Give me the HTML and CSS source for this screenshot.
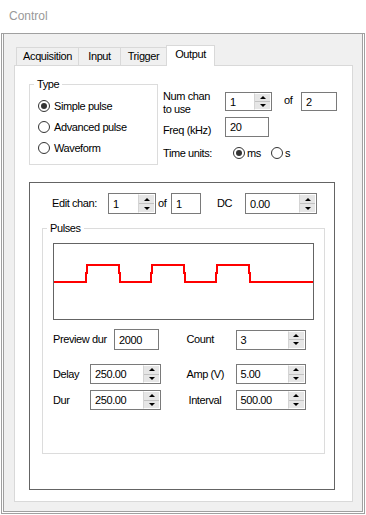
FILE: index.html
```html
<!DOCTYPE html>
<html lang="en">
<head>
    <meta charset="UTF-8">
    <title>Control</title>
    <link rel="stylesheet" href="styles.css">
</head>
<body>

    <!-- Title bar -->
    <div class="titlebar">
        <span class="title">Control</span>
    </div>

    <div class="frame">
        <div class="client">

            <!-- Tabs -->
            <div class="tabs">
                <div class="tab tab-acq">Acquisition</div>
                <div class="tab tab-input">Input</div>
                <div class="tab tab-trigger">Trigger</div>
                <div class="tab tab-output active">Output</div>
            </div>

            <div class="tab-page">
                <div class="top-area">
                    <fieldset class="group type-group">
                        <legend>Type</legend>
                        <div class="radio-row"><span class="radio checked"></span>Simple pulse</div>
                        <div class="radio-row"><span class="radio"></span>Advanced pulse</div>
                        <div class="radio-row"><span class="radio"></span>Waveform</div>
                    </fieldset>

                    <div class="chan-settings">
                        <div class="row row-chan">
                            <span class="lbl lbl-chan">Num chan<br>to use</span>
                            <div class="spin w-chan">
                                <span class="val">1</span>
                                <span class="btns"><span class="btn"><i class="up"></i></span><span class="btn"><i class="down"></i></span></span>
                            </div>
                            <span class="of of-chan">of</span>
                            <div class="field w-total">2</div>
                        </div>
                        <div class="row row-freq">
                            <span class="lbl lbl-chan">Freq (kHz)</span>
                            <div class="field w-freq">20</div>
                        </div>
                        <div class="row row-units">
                            <span class="lbl lbl-units">Time units:</span>
                            <span class="radio checked"></span><span class="opt opt-ms">ms</span>
                            <span class="radio"></span><span class="opt">s</span>
                        </div>
                    </div>
                </div>

                <div class="edit-panel">
                    <div class="edit-row">
                        <span class="lbl lbl-edit">Edit chan:</span>
                        <div class="spin w-edit">
                            <span class="val">1</span>
                            <span class="btns"><span class="btn"><i class="up"></i></span><span class="btn"><i class="down"></i></span></span>
                        </div>
                        <span class="of of-edit">of</span>
                        <div class="field w-one">1</div>
                        <span class="lbl lbl-dc">DC</span>
                        <div class="spin w-dc">
                            <span class="val">0.00</span>
                            <span class="btns"><span class="btn"><i class="up"></i></span><span class="btn"><i class="down"></i></span></span>
                        </div>
                    </div>

                    <fieldset class="group pulses-group">
                        <legend>Pulses</legend>
                        <div class="pulses-body">
                            <div class="preview">
                                <svg width="259" height="75" viewBox="0 0 259 75">
                                    <path d="M0 38 H32 V29 H33 V21 H65 V29 H66 V38 H97 V29 H98 V21 H130 V29 H131 V38 H162 V29 H163 V21 H195 V29 H196 V38 H259" fill="none" stroke="#ff0000" stroke-width="2" shape-rendering="crispEdges"/>
                                </svg>
                            </div>

                            <div class="param-row row-a">
                                <div class="cell">
                                    <span class="lbl lbl-preview">Preview dur</span>
                                    <div class="field w-preview">2000</div>
                                </div>
                                <div class="cell">
                                    <span class="lbl lbl-right">Count</span>
                                    <div class="spin w-right">
                                        <span class="val">3</span>
                                        <span class="btns"><span class="btn"><i class="up"></i></span><span class="btn"><i class="down"></i></span></span>
                                    </div>
                                </div>
                            </div>

                            <div class="param-row row-b">
                                <div class="cell">
                                    <span class="lbl lbl-short">Delay</span>
                                    <div class="spin w-left">
                                        <span class="val">250.00</span>
                                        <span class="btns"><span class="btn"><i class="up"></i></span><span class="btn"><i class="down"></i></span></span>
                                    </div>
                                </div>
                                <div class="cell">
                                    <span class="lbl lbl-right">Amp (V)</span>
                                    <div class="spin w-right">
                                        <span class="val">5.00</span>
                                        <span class="btns"><span class="btn"><i class="up"></i></span><span class="btn"><i class="down"></i></span></span>
                                    </div>
                                </div>
                            </div>

                            <div class="param-row row-c">
                                <div class="cell">
                                    <span class="lbl lbl-short">Dur</span>
                                    <div class="spin w-left">
                                        <span class="val">250.00</span>
                                        <span class="btns"><span class="btn"><i class="up"></i></span><span class="btn"><i class="down"></i></span></span>
                                    </div>
                                </div>
                                <div class="cell">
                                    <span class="lbl lbl-right lbl-interval">Interval</span>
                                    <div class="spin w-right">
                                        <span class="val">500.00</span>
                                        <span class="btns"><span class="btn"><i class="up"></i></span><span class="btn"><i class="down"></i></span></span>
                                    </div>
                                </div>
                            </div>
                        </div>
                    </fieldset>
                </div>
            </div>

        </div>
    </div>

</body>
</html>
```

FILE: styles.css
```css
* {
    margin: 0;
    padding: 0;
    box-sizing: border-box;
}

body {
    width: 366px;
    height: 515px;
    overflow: hidden;
    background: #fff;
    font-family: 'Liberation Sans', Arial, sans-serif;
    font-size: 11px;
    letter-spacing: -0.4px;
    color: #000;
}

/* Window chrome */
.titlebar {
    height: 33px;
    padding: 0 0 2px 9px;
    display: flex;
    align-items: center;
}

.title {
    font-size: 12px;
    letter-spacing: 0;
    color: #999;
}

.frame {
    margin: 0 1px;
    height: 481px;
    border: 1px solid #a0a0a0;
    padding: 0 1px 1px;
}

.client {
    height: 100%;
    border: 1px solid #a0a0a0;
    border-top: none;
    background: #f0f0f0;
    padding: 11px 9px 0 10px;
}

/* Tabs */
.tabs {
    display: flex;
    align-items: flex-end;
    height: 20px;
    padding-left: 2px;
}

.tab {
    height: 18px;
    line-height: 17px;
    text-align: center;
    border: 1px solid #d9d9d9;
    border-bottom: none;
    margin-right: -1px;
    background: #f0f0f0;
}

.tab.active {
    height: 21px;
    margin-bottom: -1px;
    padding-top: 1px;
    line-height: 15px;
    background: #fff;
    position: relative;
    z-index: 1;
}

.tab-acq { width: 63px; }
.tab-input { width: 43px; }
.tab-trigger { width: 47px; }
.tab-output { width: 49px; }

.tab-page {
    height: 437px;
    border: 1px solid #d9d9d9;
    background: #fff;
}

/* Group boxes */
.group {
    border: 1px solid #dcdcdc;
    min-width: 0;
}

.group legend {
    padding: 0 3px;
    line-height: 13px;
}

.top-area {
    display: flex;
    align-items: flex-start;
    padding-left: 14px;
}

.type-group {
    margin-top: 12px;
    width: 129px;
    padding: 4px 4px 6px;
}

.radio-row {
    display: flex;
    align-items: center;
    height: 21px;
    padding-left: 4px;
}

.radio-row .radio {
    margin-right: 4px;
}

.radio {
    width: 12px;
    height: 12px;
    flex: none;
    border: 1px solid #333;
    border-radius: 50%;
    background: #fff;
    display: flex;
    align-items: center;
    justify-content: center;
}

.radio.checked::after {
    content: '';
    width: 6px;
    height: 6px;
    border-radius: 50%;
    background: #333;
}

/* Channel settings */
.chan-settings {
    margin: 24px 0 0 5px;
}

.row {
    display: flex;
}

.lbl {
    line-height: 13px;
    flex: none;
}

.lbl-chan { width: 62px; }

.row-chan {
    align-items: flex-start;
}

.row-chan .spin {
    margin-top: 2px;
}

.row-freq {
    margin-top: 1px;
    align-items: flex-end;
}

.row-units {
    margin-top: 8px;
    height: 16px;
    align-items: center;
}

.lbl-units { width: 70px; }

.opt {
    margin-left: 2px;
}

.opt-ms {
    margin-right: 10px;
}

.of {
    line-height: 13px;
    flex: none;
}

.of-chan {
    margin: 4px 0 0 12px;
    width: 17px;
}

/* Inputs */
.field,
.spin {
    display: flex;
    align-items: center;
    border: 1px solid #7a7a7a;
    background: #fff;
    flex: none;
}

.field {
    padding-left: 4px;
}

.spin .val {
    flex: 1;
    padding-left: 4px;
}

.btns {
    width: 17px;
    height: 100%;
    display: flex;
    flex-direction: column;
    background: #e6e6e6;
    border: 1px solid #fff;
    border-left: 1px solid #d4d4d4;
}

.btn {
    flex: 1;
    display: flex;
    align-items: center;
    justify-content: center;
}

.btn + .btn {
    border-top: 1px solid #c2c2c2;
}

.up {
    border-left: 3px solid transparent;
    border-right: 3px solid transparent;
    border-bottom: 3px solid #000;
}

.down {
    border-left: 3px solid transparent;
    border-right: 3px solid transparent;
    border-top: 3px solid #000;
}

.w-chan { width: 47px; height: 19px; }
.w-total { width: 36px; height: 19px; margin-top: 2px; }
.w-freq { width: 44px; height: 20px; }
.w-edit { width: 48px; height: 21px; }
.w-one { width: 30px; height: 21px; }
.w-dc { width: 72px; height: 21px; }
.w-preview { width: 45px; height: 21px; }
.w-left { width: 71px; height: 20px; }
.w-right { width: 70px; height: 20px; }

/* Edit panel */
.edit-panel {
    margin: 17px 0 0 14px;
    width: 306px;
    height: 308px;
    border: 1px solid #646464;
    padding: 10px 0 0 12px;
}

.edit-row {
    display: flex;
    align-items: center;
    height: 21px;
    padding-left: 10px;
}

.lbl-edit { width: 56px; }

.of-edit {
    margin-left: 2px;
    width: 13px;
}

.lbl-dc {
    margin-left: 16px;
    width: 28px;
}

.pulses-group {
    margin-top: 8px;
    width: 283px;
    padding: 0 4px 43px;
}

.pulses-body {
    padding-left: 6px;
}

.preview {
    margin-top: 8px;
    width: 261px;
    height: 77px;
    border: 1px solid #646464;
    background: #fff;
}

.preview svg {
    display: block;
}

.param-row {
    display: flex;
}

.param-row .cell {
    display: flex;
    align-items: center;
    width: 136px;
}

.row-a { margin-top: 9px; }
.row-b { margin-top: 14px; }
.row-c { margin-top: 6px; }

.lbl-preview { width: 61px; }
.lbl-short { width: 37px; }
.lbl-right { width: 49px; }
.lbl-interval { padding-left: 2px; }
```
